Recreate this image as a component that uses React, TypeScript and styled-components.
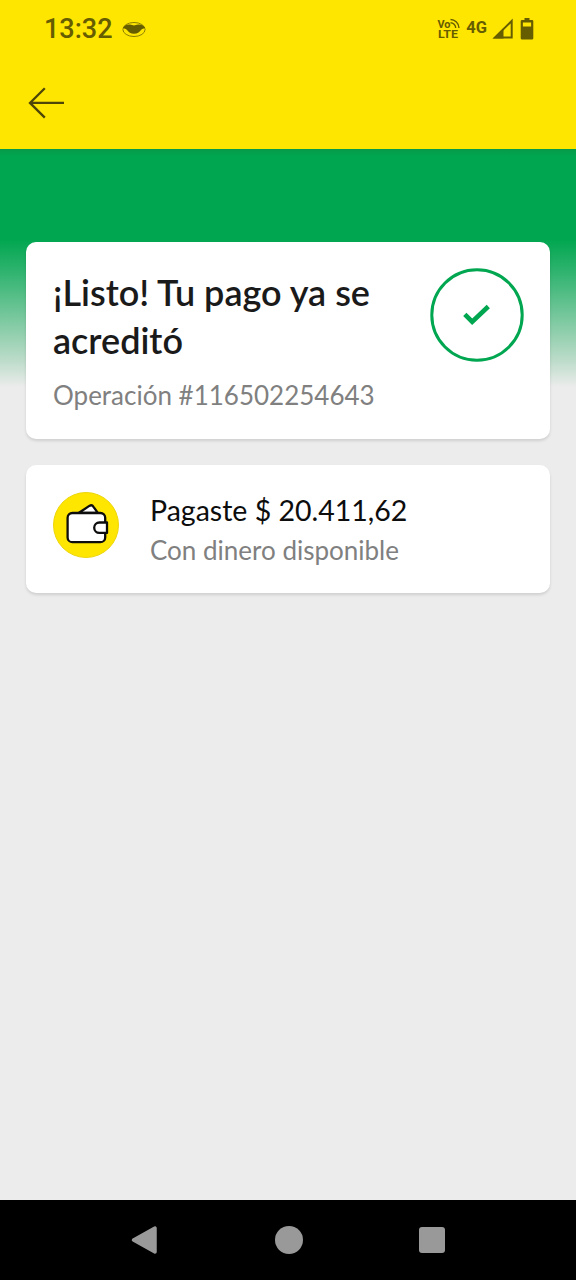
import React from "react";
import styled, { createGlobalStyle } from "styled-components";

const GlobalStyle = createGlobalStyle`
  * { box-sizing: border-box; }
  body { margin: 0; background: #ececec; }
`;

const Screen = styled.div`
  width: 576px;
  height: 1280px;
  display: flex;
  flex-direction: column;
  overflow: hidden;
  background: #ececec;
  font-family: Lato, "Open Sans", sans-serif;
`;

const Header = styled.header`
  flex: none;
  height: 149px;
  background: #ffe600;
`;

const StatusBar = styled.div`
  height: 58px;
  padding: 0 42px 0 44px;
  display: flex;
  align-items: center;
  justify-content: space-between;
  font-family: Roboto, sans-serif;
  color: #665c00;
`;

const StatusGroup = styled.div`
  display: flex;
  align-items: center;
`;

const Clock = styled.span`
  font-size: 27px;
  font-weight: 500;
  line-height: 32px;
  letter-spacing: 0;
  margin-right: 9px;
`;

const NetworkLabel = styled.span`
  font-size: 16.5px;
  font-weight: 700;
  line-height: 20px;
  margin: 0 5px 3px 5px;
`;

const Toolbar = styled.div`
  height: 91px;
  padding: 28px 0 0 27px;
`;

const Content = styled.main`
  flex: 1;
  display: flex;
  flex-direction: column;
  gap: 26px;
  padding: 93px 26px 0;
  background: linear-gradient(
      180deg,
      #069a4a 0,
      #00a650 8px,
      #00a650 90px,
      #2eb36e 122px,
      #7cc9a0 171px,
      #bddcca 212px,
      #ececec 238px
    )
    0 0 / 100% 238px no-repeat;
`;

const Card = styled.section`
  display: flex;
  background: #fff;
  border-radius: 10px;
  box-shadow: 0 2px 3px rgba(0, 0, 0, 0.12);
`;

const ResultCard = styled(Card)`
  height: 197px;
  padding: 26px 26px 0 27px;
  justify-content: space-between;
`;

const PaymentCard = styled(Card)`
  height: 128px;
  padding: 27px;
  gap: 31px;
`;

const Title = styled.h1`
  margin: 0 0 15px;
  font-size: 36px;
  font-weight: 600;
  line-height: 48px;
  color: #1a1a1a;
`;

const TitleLine = styled.span<{ $spacing: number }>`
  display: block;
  white-space: nowrap;
  letter-spacing: ${(p) => p.$spacing}px;
`;

const Caption = styled.p<{ $spacing: number }>`
  margin: 0;
  font-size: 26px;
  line-height: 32px;
  white-space: nowrap;
  letter-spacing: ${(p) => p.$spacing}px;
  color: #808080;
`;

const Amount = styled.p`
  margin: 0 0 6px;
  font-size: 28.5px;
  line-height: 36px;
  white-space: nowrap;
  letter-spacing: 0;
  color: #0d0d0d;
`;

const NavBar = styled.nav`
  flex: none;
  height: 80px;
  padding: 0 130px;
  display: flex;
  align-items: center;
  justify-content: space-between;
  background: #000;
`;

const MustacheIcon = () => (
  <svg width="24" height="17" viewBox="0 0 24 17">
    <ellipse cx="12" cy="8.5" rx="11.1" ry="7" fill="none" stroke="#8b7e00" strokeWidth="1" />
    <path
      d="M1 6.8C2.5 4.2 5 3.4 8 3.6c1.500 .2 2.700 1 4 1s2.500-.8 4-1c3-.2 5.500.6 7 3.200-1.500 1-3 1.200-4 2.200-1.700 2-3.500 3.800-7 3.800S6.700 11 5 9C4 8 2.500 7.800 1 6.800Z"
      fill="#665c00"
    />
  </svg>
);

const VolteIcon = () => (
  <svg width="24" height="22" viewBox="0 0 24 22" fill="#665c00" fontFamily="Roboto, sans-serif" fontWeight="700">
    <text x="0.500" y="9.500" fontSize="11" textLength="13" lengthAdjust="spacingAndGlyphs">Vo</text>
    <text x="1" y="20" fontSize="11.500" textLength="20" lengthAdjust="spacingAndGlyphs">LTE</text>
    <g fill="none" stroke="#665c00" strokeWidth="1.400">
      <path d="M13.500 1.500c4.500 0 8.500 4 8.500 8.500" />
      <path d="M13.500 4.800c2.800 0 5.200 2.400 5.200 5.200" />
    </g>
  </svg>
);

const SignalIcon = () => (
  <svg width="22" height="22" viewBox="0 0 22 22">
    <path d="M2.800 19.600 19.700 3v16.600Z" fill="none" stroke="#665c00" strokeWidth="2" />
    <path d="M1 20.500 11.500 10v10.500Z" fill="#665c00" />
  </svg>
);

const BatteryIcon = () => (
  <svg width="14" height="22" viewBox="0 0 14 22">
    <path
      fill="#665c00"
      fillRule="evenodd"
      d="M4.500 0h5v2H12a1.300 1.300 0 0 1 1.300 1.300v17A1.300 1.300 0 0 1 12 21.600H2A1.300 1.300 0 0 1 .7 20.300v-17A1.300 1.300 0 0 1 2 2h2.500ZM2.900 4.500v4h8.200v-4Z"
    />
  </svg>
);

const BackIcon = () => (
  <svg width="38" height="34" viewBox="0 0 38 34" fill="none" stroke="#4d4608" strokeWidth="2.300">
    <path d="M17.800 2.200 3 16.900l14.800 14.700M3 16.900h34" />
  </svg>
);

const CheckBadge = () => (
  <svg width="94" height="94" viewBox="0 0 94 94" fill="none" stroke="#00a650">
    <circle cx="47" cy="47" r="45.200" strokeWidth="3" />
    <path d="M34.800 46.300l7.400 7.400L58.300 38.500" strokeWidth="4.600" />
  </svg>
);

const WalletIcon = () => (
  <svg width="66" height="66" viewBox="0 0 66 66" stroke="#0d0d0d" strokeWidth="2.300" strokeLinejoin="round">
    <circle cx="33" cy="33" r="32.500" fill="#ffe600" stroke="#ecd50c" strokeWidth="1" />
    <path d="M26 20.800l10.300-6.900c1.700-1 3.200-.7 4.200.9l4.300 6Z" fill="#fff" />
    <rect x="14.600" y="21" width="37.600" height="29.200" rx="4.800" fill="#fff" />
    <path d="M54 30.500h-7.600a5.200 5.200 0 0 0 0 10.400H54Z" fill="#fff" />
  </svg>
);

const NavBackIcon = () => (
  <svg width="28" height="30" viewBox="0 0 28 30">
    <path d="M3.500 15 25 3v24Z" fill="#999" stroke="#999" strokeWidth="3.500" strokeLinejoin="round" />
  </svg>
);

const NavHome = styled.span`
  width: 28px;
  height: 28px;
  border-radius: 50%;
  background: #999;
`;

const NavRecents = styled.span`
  width: 26px;
  height: 26px;
  margin-right: 1px;
  border-radius: 3px;
  background: #999;
`;

export default function App() {
  return (
    <>
      <GlobalStyle />
      <Screen>
        <Header>
          <StatusBar>
            <StatusGroup>
              <Clock>13:32</Clock>
              <MustacheIcon />
            </StatusGroup>
            <StatusGroup>
              <VolteIcon />
              <NetworkLabel>4G</NetworkLabel>
              <SignalIcon />
              <span style={{ width: 6 }} />
              <BatteryIcon />
            </StatusGroup>
          </StatusBar>
          <Toolbar>
            <BackIcon />
          </Toolbar>
        </Header>
        <Content>
          <ResultCard>
            <div>
              <Title>
                <TitleLine $spacing={0}>¡Listo! Tu pago ya se</TitleLine>
                <TitleLine $spacing={0}>acreditó</TitleLine>
              </Title>
              <Caption $spacing={0}>Operación #116502254643</Caption>
            </div>
            <CheckBadge />
          </ResultCard>
          <PaymentCard>
            <WalletIcon />
            <div>
              <Amount>Pagaste $ 20.411,62</Amount>
              <Caption $spacing={0}>Con dinero disponible</Caption>
            </div>
          </PaymentCard>
        </Content>
        <NavBar>
          <NavBackIcon />
          <NavHome />
          <NavRecents />
        </NavBar>
      </Screen>
    </>
  );
}
